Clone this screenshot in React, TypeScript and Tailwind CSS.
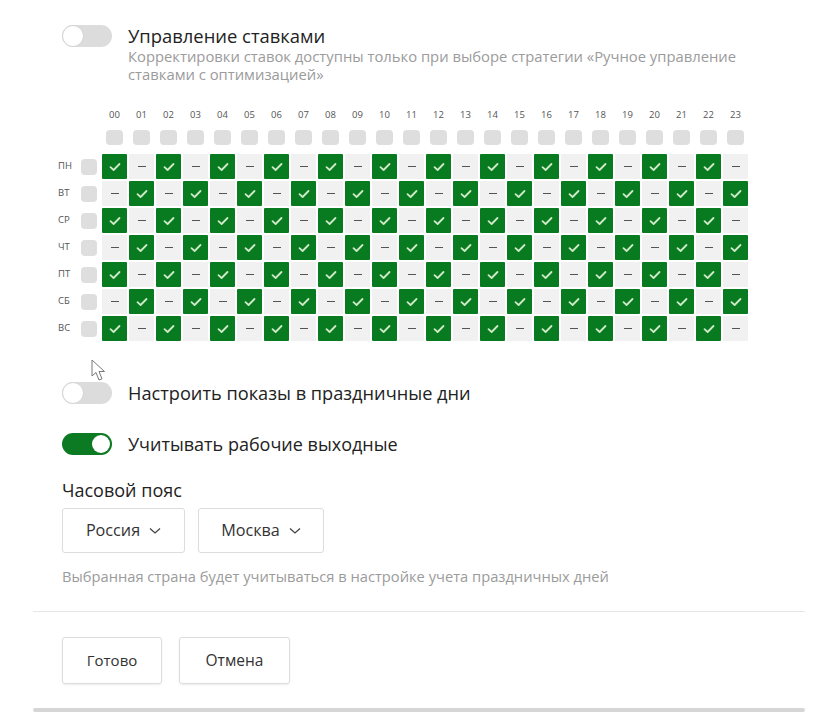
import React from "react";

const hours = Array.from({ length: 24 }, (_, i) => String(i).padStart(2, "0"));
const days = ["ПН", "ВТ", "СР", "ЧТ", "ПТ", "СБ", "ВС"];

function Toggle({ on }: { on?: boolean }) {
  return on ? (
    <div className="relative w-[50px] h-[22px] rounded-full bg-[#0b7a23] shrink-0">
      <div className="absolute right-[2px] top-[2px] w-[18px] h-[18px] rounded-full bg-white" />
    </div>
  ) : (
    <div className="relative w-[50px] h-[22px] rounded-full bg-[#dcdcdc] shrink-0">
      <div className="absolute left-0 top-0 w-[22px] h-[22px] rounded-full bg-white border border-[#d4d4d4]" />
    </div>
  );
}

function Check() {
  return (
    <svg width="12" height="10" viewBox="0 0 12 10">
      <path d="M1.5 5.2 L4.6 8 L10.5 2" fill="none" stroke="#cfe9c9" strokeWidth="1.8" strokeLinecap="round" strokeLinejoin="round" />
    </svg>
  );
}

function Chevron() {
  return (
    <svg width="12" height="8" viewBox="0 0 12 8" className="ml-[9px]">
      <path d="M1 1.5 L6 6 L11 1.5" fill="none" stroke="#444" strokeWidth="1.3" />
    </svg>
  );
}

export default function App() {
  const font = { fontFamily: '"Open Sans", "Noto Sans", sans-serif' };
  return (
    <div className="relative w-[824px] h-[719px] overflow-hidden bg-white pl-[62px] pt-[25px] text-[#222]" style={font}>
      {/* Bid management */}
      <div className="flex">
        <div className="pt-0">
          <Toggle />
        </div>
        <div className="ml-[16px]">
          <div className="text-[18.4px] leading-[22px] text-[#222]">Управление ставками</div>
          <div className="text-[14.8px] leading-[18px] text-[#9b9b9b] w-[640px]">
            Корректировки ставок доступны только при выборе стратегии «Ручное управление ставками с оптимизацией»
          </div>
        </div>
      </div>

      {/* Schedule grid */}
      <div className="ml-[-4px] mt-[26px]">
        <div className="flex">
          <div className="w-[44px] shrink-0" />
          <div className="flex gap-[2px]">
            {hours.map((h) => (
              <div key={h} className="w-[25px] text-center text-[9.5px] leading-[12px] text-[#555]">
                {h}
              </div>
            ))}
          </div>
        </div>
        <div className="flex mt-[9px]">
          <div className="w-[44px] shrink-0" />
          <div className="flex gap-[2px]">
            {hours.map((h) => (
              <div key={h} className="w-[25px] flex justify-center">
                <div className="w-[17px] h-[15px] rounded-[4px] bg-[#dedede]" />
              </div>
            ))}
          </div>
        </div>
        <div className="mt-[9px] flex flex-col gap-[2px]">
          {days.map((d, di) => (
            <div key={d} className="flex items-center h-[25px]">
              <div className="w-[23px] text-[9.5px] text-[#555] shrink-0">{d}</div>
              <div className="w-[16px] h-[16px] rounded-[4px] bg-[#dedede] shrink-0" />
              <div className="w-[5px] shrink-0" />
              <div className="flex gap-[2px]">
                {hours.map((h, hi) =>
                  (di + hi) % 2 === 0 ? (
                    <div key={h} className="w-[25px] h-[25px] bg-[#087a1f] rounded-[1px] flex items-center justify-center">
                      <Check />
                    </div>
                  ) : (
                    <div key={h} className="w-[25px] h-[25px] bg-[#f1f1f1] flex items-center justify-center">
                      <div className="w-[8px] h-[1.6px] bg-[#555]" />
                    </div>
                  )
                )}
              </div>
            </div>
          ))}
        </div>
      </div>

      {/* Toggles */}
      <div className="flex items-center mt-[41px] h-[22px]">
        <Toggle />
        <span className="ml-[16px] text-[18.2px] leading-[22px] text-[#222]">Настроить показы в праздничные дни</span>
      </div>
      <div className="flex items-center mt-[29px] h-[22px]">
        <Toggle on />
        <span className="ml-[16px] text-[18px] leading-[22px] text-[#222]">Учитывать рабочие выходные</span>
      </div>

      {/* Timezone */}
      <div className="mt-[24px] text-[18px] leading-[22px] text-[#222]">Часовой пояс</div>
      <div className="mt-[7px] flex gap-[13px]">
        <div className="w-[123px] h-[45px] border border-[#dcdcdc] rounded-[3px] flex items-center justify-center text-[16.2px] text-[#333]">
          Россия
          <Chevron />
        </div>
        <div className="w-[126px] h-[45px] border border-[#dcdcdc] rounded-[3px] flex items-center justify-center text-[16.2px] text-[#333]">
          Москва
          <Chevron />
        </div>
      </div>
      <div className="mt-[14px] text-[14.7px] leading-[18px] text-[#9b9b9b]">
        Выбранная страна будет учитываться в настройке учета праздничных дней
      </div>

      {/* Divider */}
      <div className="mt-[26px] ml-[-29px] w-[772px] h-[1px] bg-[#e6e6e6]" />

      {/* Buttons */}
      <div className="mt-[25px] flex gap-[17px]">
        <div className="w-[100px] h-[47px] border border-[#dcdcdc] rounded-[3px] flex items-center justify-center text-[15px] text-[#333] shadow-[0_1px_2px_rgba(0,0,0,0.08)]">
          Готово
        </div>
        <div className="w-[111px] h-[47px] border border-[#dcdcdc] rounded-[3px] flex items-center justify-center text-[15.5px] text-[#333] shadow-[0_1px_2px_rgba(0,0,0,0.08)]">
          Отмена
        </div>
      </div>

      <div className="mt-[24px] ml-[-29px] w-[772px] h-[4px] bg-[#d6d6d6] rounded-[2px]" />

      {/* Mouse cursor */}
      <svg className="absolute left-[91px] top-[359px]" width="16" height="24" viewBox="0 0 16 24">
        <path d="M1 1 L1 17 L5 13.5 L8 21 L11 19.8 L8 12.5 L13.5 12.5 Z" fill="#fff" stroke="#777" strokeWidth="1" strokeLinejoin="round" />
      </svg>
    </div>
  );
}
